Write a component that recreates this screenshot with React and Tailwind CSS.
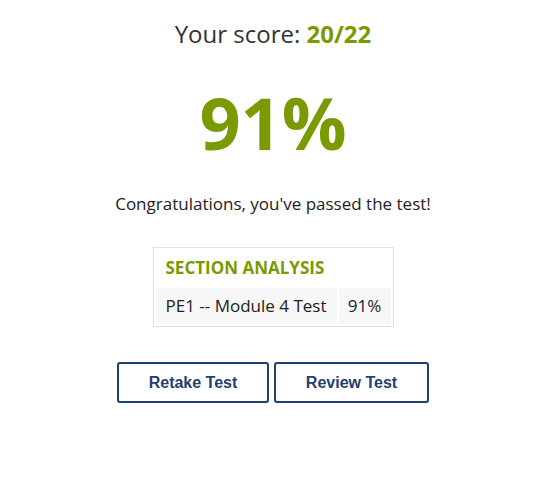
import React from 'react';

const green = 'text-[#7a9a01]';

const App = () => {
  return (
    <div className="min-h-[478px] w-full bg-white flex flex-col items-center pt-[18px] pl-[5px] font-['Open_Sans',sans-serif] text-[#333]">
      <h2 className="text-[24px] leading-8 font-normal">
        Your score: <span className={`font-bold ${green}`}>20/22</span>
      </h2>

      {/* Percent */}
      <div className={`text-[72px] leading-none font-bold mt-[36px] ${green}`}>91%</div>

      <p className="text-[17px] leading-6 mt-[34px] text-[#222]">Congratulations, you've passed the test!</p>

      {/* Section analysis */}
      <table className="mt-[31px] border border-[#e0e0e0] border-separate border-spacing-[2px] text-[17px]">
        <thead>
          <tr>
            <th colSpan={2} className={`text-left font-bold px-[10px] py-[6px] leading-6 ${green}`}>
              SECTION ANALYSIS
            </th>
          </tr>
        </thead>
        <tbody>
          <tr>
            <td className="bg-[#f7f7f7] px-[10px] py-[6px] leading-6 w-[181px] text-[#222]">PE1 -- Module 4 Test</td>
            <td className="bg-[#f7f7f7] px-[6px] py-[6px] leading-6 w-[52px] text-center text-[#222]">91%</td>
          </tr>
        </tbody>
      </table>

      <div className="flex gap-[5px] mt-[35px] font-['Liberation_Sans',sans-serif]">
        <button className="w-[152px] h-[41px] border-2 border-[#1f3f6f] rounded-[3px] bg-white text-[#1f3f6f] font-bold text-base">
          Retake Test
        </button>
        <button className="w-[155px] h-[41px] border-2 border-[#1f3f6f] rounded-[3px] bg-white text-[#1f3f6f] font-bold text-base">
          Review Test
        </button>
      </div>
    </div>
  );
};

export default App;
